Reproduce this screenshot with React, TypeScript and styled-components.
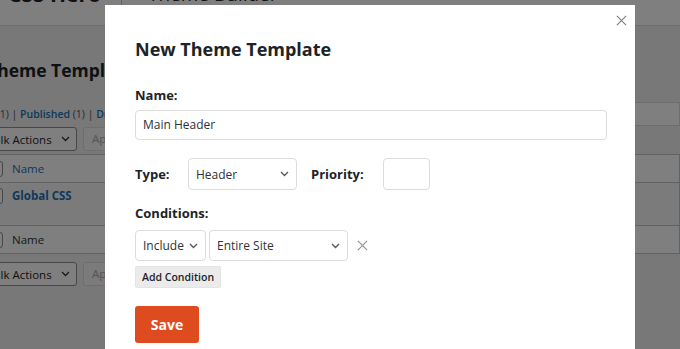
import styled, { createGlobalStyle } from 'styled-components';

const GlobalStyle = createGlobalStyle`
  html, body {
    margin: 0;
    padding: 0;
    width: 680px;
    height: 349px;
    overflow: hidden;
    background: #f0f0f1;
    font-family: 'Open Sans', 'Noto Sans', sans-serif;
    color: #1d2327;
  }
`;

const Page = styled.div`
  position: relative;
  width: 680px;
  height: 349px;
  overflow: hidden;
`;

const AdminHeader = styled.div`
  display: flex;
  align-items: flex-end;
  height: 26px;
  background: #fff;
  border-bottom: 1px solid #dcdcde;
  overflow: hidden;
  box-sizing: border-box;
`;

const HeaderRow = styled.div`
  display: flex;
  align-items: center;
  margin-left: 8px;
  margin-bottom: 18px;
  line-height: 26px;
`;

const Logo = styled.span`
  font-size: 21px;
  font-weight: 700;
`;

const Separator = styled.span`
  width: 1px;
  height: 26px;
  margin: 0 26px 0 20px;
  background: #c3c4c7;
`;

const HeaderTitle = styled.span`
  font-size: 19px;
  font-weight: 400;
`;

const Content = styled.div`
  display: flex;
  flex-direction: column;
  margin-left: -13px;
`;

const PageTitle = styled.h1`
  margin: 32px 0 0;
  font-size: 17.5px;
  line-height: 24px;
  font-weight: 700;
`;

const FilterRow = styled.div`
  display: flex;
  justify-content: space-between;
  align-items: center;
  margin-top: 20px;
  height: 24px;
`;

const Filters = styled.div`
  font-size: 10.5px;
  color: #50575e;
  margin-left: -5px;

  a {
    color: #2271b1;
    font-weight: 600;
    text-decoration: none;
  }
`;

const SearchBox = styled.div`
  width: 150px;
  height: 24px;
  background: #fff;
  border: 1px solid #dcdcde;
  box-sizing: border-box;
`;

const TableNav = styled.div<{ $top: number }>`
  display: flex;
  align-items: center;
  gap: 6px;
  margin-top: ${(p) => p.$top}px;
  margin-left: -9px;
  height: 24px;
`;

const BulkSelect = styled.div`
  display: flex;
  align-items: center;
  justify-content: space-between;
  width: 99px;
  height: 24px;
  padding: 0 6px 0 7px;
  box-sizing: border-box;
  border: 1px solid #8c8f94;
  border-radius: 3px;
  background: #fff;
  font-size: 11.5px;
  white-space: nowrap;
`;

const ApplyButton = styled.div`
  height: 24px;
  padding: 0 8px;
  line-height: 22px;
  font-size: 11.5px;
  color: #a7aaad;
  border: 1px solid #dcdcde;
  border-radius: 3px;
  background: #f6f7f7;
  box-sizing: border-box;
`;

const Table = styled.div`
  display: flex;
  flex-direction: column;
  margin-top: 3px;
  margin-left: -9px;
  border: 1px solid #c3c4c7;
  background: #fff;
`;

const TableRow = styled.div<{ $height: number; $striped?: boolean; $bold?: boolean }>`
  display: flex;
  align-items: ${(p) => (p.$bold ? 'flex-start' : 'center')};
  gap: 9px;
  height: ${(p) => p.$height}px;
  padding: ${(p) => (p.$bold ? '5px' : '0')} 0 0 8px;
  background: ${(p) => (p.$striped ? '#f6f7f7' : '#fff')};
  border-bottom: 1px solid #c3c4c7;
  box-sizing: border-box;
  font-size: 11.5px;
  color: ${(p) => (p.$bold ? '#2271b1' : '#2c3338')};
  font-weight: ${(p) => (p.$bold ? 700 : 400)};

  &:last-child {
    border-bottom: none;
  }
`;

const HeaderLink = styled.span`
  color: #2271b1;
`;

const Checkbox = styled.span`
  width: 14px;
  height: 14px;
  border: 1px solid #8c8f94;
  border-radius: 3px;
  background: #fff;
`;

const Overlay = styled.div`
  position: absolute;
  inset: 0;
  background: rgba(0, 0, 0, 0.5);
`;

const Modal = styled.div`
  position: absolute;
  left: 105px;
  top: 5px;
  width: 530px;
  height: 380px;
  box-sizing: border-box;
  padding: 31px 28px 0 30px;
  background: #fff;
  display: flex;
  flex-direction: column;
`;

const CloseButton = styled.button`
  position: absolute;
  top: 4px;
  right: 3px;
  width: 22px;
  height: 22px;
  padding: 0;
  border: none;
  background: none;
  display: flex;
  align-items: center;
  justify-content: center;
`;

const Title = styled.h2`
  margin: 0;
  font-size: 18px;
  line-height: 26px;
  font-weight: 700;
  color: #1d2327;
`;

const Label = styled.div<{ $top: number }>`
  margin-top: ${(p) => p.$top}px;
  font-size: 13px;
  line-height: 20px;
  font-weight: 700;
  color: #1d2327;
`;

const TextInput = styled.div`
  margin-top: 5px;
  height: 30px;
  padding: 0 7px;
  line-height: 28px;
  font-size: 12px;
  color: #2c3338;
  border: 1px solid #dcdcde;
  border-radius: 4px;
  box-sizing: border-box;
`;

const FieldRow = styled.div<{ $top: number }>`
  display: flex;
  align-items: center;
  margin-top: ${(p) => p.$top}px;
`;

const InlineLabel = styled.span<{ $width: number; $left?: number }>`
  width: ${(p) => p.$width}px;
  margin-left: ${(p) => p.$left ?? 0}px;
  font-size: 13px;
  line-height: 20px;
  font-weight: 700;
  color: #1d2327;
`;

const Select = styled.div<{ $width: number; $height: number }>`
  display: flex;
  align-items: center;
  justify-content: space-between;
  width: ${(p) => p.$width}px;
  height: ${(p) => p.$height}px;
  padding: 0 7px 0 7px;
  box-sizing: border-box;
  border: 1px solid #dcdcde;
  border-radius: 4px;
  font-size: 12px;
  color: #2c3338;
`;

const NumberInput = styled.div`
  width: 47px;
  height: 32px;
  border: 1px solid #dcdcde;
  border-radius: 4px;
  box-sizing: border-box;
`;

const ConditionRow = styled.div`
  display: flex;
  align-items: center;
  gap: 3px;
  margin-top: 7px;
`;

const RemoveButton = styled.span`
  display: flex;
  margin-left: 6px;
`;

const AddButton = styled.div`
  align-self: flex-start;
  margin-top: 5px;
  height: 22px;
  padding: 0 6px;
  line-height: 20px;
  font-size: 10.5px;
  font-weight: 600;
  color: #1d2327;
  background: #ebebeb;
  border: 1px solid #e4e4e4;
  border-radius: 2px;
  box-sizing: border-box;
`;

const SaveButton = styled.div`
  align-self: flex-start;
  margin-top: 18px;
  width: 64px;
  height: 37px;
  line-height: 37px;
  text-align: center;
  font-size: 14px;
  font-weight: 700;
  color: #fff;
  background: #de4b1f;
  border-radius: 3px;
`;

function Chevron({ color = '#50575e' }: { color?: string }) {
  return (
    <svg width='9' height='6' viewBox='0 0 9 6'>
      <path d='M1 1l3.5 3.5L8 1' fill='none' stroke={color} strokeWidth='1.3' />
    </svg>
  );
}

function Cross({ size, color }: { size: number; color: string }) {
  return (
    <svg width={size} height={size} viewBox='0 0 12 12'>
      <path d='M1 1l10 10M11 1L1 11' stroke={color} strokeWidth='1.2' />
    </svg>
  );
}

function AdminBackground() {
  return (
    <>
      <AdminHeader>
        <HeaderRow>
          <Logo>CSS Hero</Logo>
          <Separator />
          <HeaderTitle>Theme Builder</HeaderTitle>
        </HeaderRow>
      </AdminHeader>
      <Content>
        <PageTitle>Theme Templates</PageTitle>
        <FilterRow>
          <Filters>
            All (1) | <a>Published</a> (1) | <a>Drafts</a> (0)
          </Filters>
          <SearchBox />
        </FilterRow>
        <TableNav $top={1}>
          <BulkSelect>
            Bulk Actions <Chevron color='#2c3338' />
          </BulkSelect>
          <ApplyButton>Apply</ApplyButton>
        </TableNav>
        <Table>
          <TableRow $height={28}>
            <Checkbox />
            <HeaderLink>Name</HeaderLink>
          </TableRow>
          <TableRow $height={43} $striped $bold>
            <Checkbox />
            Global CSS
          </TableRow>
          <TableRow $height={27}>
            <Checkbox />
            Name
          </TableRow>
        </Table>
        <TableNav $top={8}>
          <BulkSelect>
            Bulk Actions <Chevron color='#2c3338' />
          </BulkSelect>
          <ApplyButton>Apply</ApplyButton>
        </TableNav>
      </Content>
    </>
  );
}

export default function App() {
  return (
    <Page>
      <GlobalStyle />
      <AdminBackground />
      <Overlay />
      <Modal>
        <CloseButton aria-label='Close'>
          <Cross size={11} color='#787c82' />
        </CloseButton>
        <Title>New Theme Template</Title>
        <Label $top={23}>Name:</Label>
        <TextInput>Main Header</TextInput>
        <FieldRow $top={18}>
          <InlineLabel $width={53}>Type:</InlineLabel>
          <Select $width={109} $height={32}>
            Header <Chevron />
          </Select>
          <InlineLabel $width={72} $left={14}>
            Priority:
          </InlineLabel>
          <NumberInput />
        </FieldRow>
        <Label $top={13}>Conditions:</Label>
        <ConditionRow>
          <Select $width={71} $height={31}>
            Include <Chevron />
          </Select>
          <Select $width={139} $height={31}>
            Entire Site <Chevron />
          </Select>
          <RemoveButton>
            <Cross size={11} color='#8c8f94' />
          </RemoveButton>
        </ConditionRow>
        <AddButton>Add Condition</AddButton>
        <SaveButton>Save</SaveButton>
      </Modal>
    </Page>
  );
}
